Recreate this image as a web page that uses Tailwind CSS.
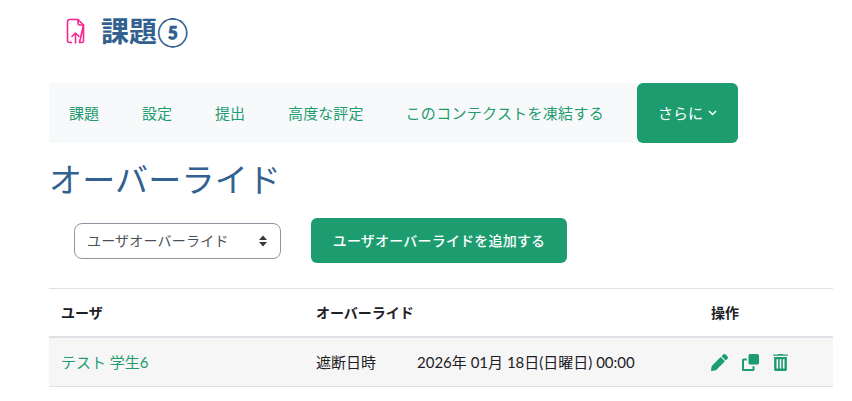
<!DOCTYPE html>
<html lang="ja">
<head>
  <meta charset="UTF-8" />
  <title>オーバーライド</title>
  <script src="https://cdn.jsdelivr.net/npm/@tailwindcss/browser@4"></script>
</head>
<body class="bg-white text-[#1d2125] font-['Lato','Noto_Sans_CJK_JP',sans-serif] text-[15px] overflow-hidden">
  <div class="w-[852px] h-[401px] pl-[49px] pr-[19px] overflow-hidden">
    <!-- Page header -->
    <div class="flex items-center h-[83px] pb-[22px] pl-[17px]">
      <svg class="w-[19px] h-[26px] text-[#f7258f]" viewBox="0 0 19 26" fill="none" stroke="currentColor" stroke-width="1.6" stroke-linecap="round" stroke-linejoin="round">
        <path d="M12 1.5H3.5a2 2 0 0 0-2 2v19a2 2 0 0 0 2 2h2M13.500 24.500h2a2 2 0 0 0 2-2V7z" />
        <path d="M12 1.500v3.500a2 2 0 0 0 2 2h3.500L12 1.500zM9.500 25v-10M6 18.500l3.500-3.500 3.500 3.500" />
      </svg>
      <h1 class="ml-[16px] text-[28px] leading-none font-bold text-[#32608f]">課題⑤</h1>
    </div>

    <!-- Secondary navigation -->
    <nav class="flex items-stretch h-[60px] w-[689px] text-[#1d9d6f]">
      <div class="flex items-center flex-1 bg-[#f8f9fa] pl-[20px] gap-[43px]">
        <a>課題</a>
        <a>設定</a>
        <a>提出</a>
        <a class="whitespace-nowrap -ml-[0px] tracking-[0.1px]">高度な評定</a>
        <a class="whitespace-nowrap -ml-[1px] tracking-[0.3px]">このコンテクストを凍結する</a>
      </div>
      <button class="flex items-center justify-center gap-[5px] w-[101px] rounded-md bg-[#1d9d6f] text-white">
        さらに
        <svg class="w-[9px] h-[6px]" viewBox="0 0 9 6" fill="none" stroke="currentColor" stroke-width="1.500"><path d="M1 1l3.500 3.500L8 1" /></svg>
      </button>
    </nav>

    <h2 class="mt-[14px] text-[33px] leading-[44px] text-[#32608f] tracking-[0.2px]">オーバーライド</h2>

    <!-- Controls -->
    <div class="flex items-center mt-[17px] pl-[25px]">
      <div class="flex items-center justify-between w-[207px] h-[36px] pl-[12px] pr-[13px] border border-[#8f959e] rounded-lg text-[14px] text-[#495057] tracking-[0.2px]">
        ユーザオーバーライド
        <svg class="w-[8px] h-[12px] text-[#343a40]" viewBox="0 0 8 12" fill="currentColor"><path d="M4 0.500L8 5H0zM4 11.500L0 7h8z" /></svg>
      </div>
      <button class="ml-[30px] h-[45px] w-[256px] rounded-md bg-[#1d9d6f] text-white text-[14px] font-medium tracking-[0.2px]">ユーザオーバーライドを追加する</button>
    </div>

    <!-- Overrides table -->
    <div class="mt-[25px] w-[784px]">
      <div class="flex items-center h-[50px] border-t border-[#dee2e6] border-b-2 font-bold text-[14px]">
        <div class="w-[267px] pl-[12px]">ユーザ</div>
        <div class="w-[395px]">オーバーライド</div>
        <div>操作</div>
      </div>
      <div class="flex items-center h-[49px] bg-[#f6f6f6] border-b border-[#dee2e6]">
        <div class="w-[267px] pl-[12px] text-[#1d9d6f]">テスト 学生6</div>
        <div class="flex w-[395px]">
          <span class="w-[101px]">遮断日時</span>
          <span>2026年 01月 18日(日曜日) 00:00</span>
        </div>
        <div class="flex items-center gap-[14px] text-[#1d9d6f]">
          <svg class="w-[17px] h-[17px]" viewBox="0 0 512 512" fill="currentColor"><path d="M497.900 142.100l-46.100 46.100c-4.700 4.700-12.300 4.700-17 0l-111-111c-4.700-4.700-4.700-12.300 0-17l46.100-46.100c18.700-18.700 49.100-18.700 67.900 0l60.100 60.100c18.800 18.700 18.800 49.100 0 67.900zM284.200 99.800L21.600 362.400.4 483.900c-2.900 16.400 11.400 30.600 27.800 27.800l121.500-21.300 262.600-262.600c4.700-4.700 4.700-12.300 0-17l-111-111c-4.800-4.700-12.400-4.700-17.100 0z" /></svg>
          <svg class="w-[17px] h-[17px]" viewBox="0 0 17 17" fill="currentColor"><path d="M6.500 1.500A1.500 1.500 0 0 1 8 0h7.500A1.500 1.500 0 0 1 17 1.500V9a1.500 1.500 0 0 1-1.500 1.500H8A1.500 1.500 0 0 1 6.500 9z" /><path d="M4.800 4.500H1.500A1.500 1.500 0 0 0 0 6v9.500A1.500 1.500 0 0 0 1.500 17H11a1.500 1.500 0 0 0 1.500-1.500v-3.300h-2v2.800H2V6.500h2.800z" /></svg>
          <svg class="w-[15px] h-[17px]" viewBox="0 0 448 512" fill="currentColor"><path d="M432 32H312l-9.400-18.700A24 24 0 0 0 281.100 0H166.800a23.700 23.700 0 0 0-21.400 13.300L136 32H16A16 16 0 0 0 0 48v32a16 16 0 0 0 16 16h416a16 16 0 0 0 16-16V48a16 16 0 0 0-16-16z" transform="translate(0 0) scale(1 .55)" /><path fill-rule="evenodd" d="M32 90h384v374a48 48 0 0 1-48 48H80a48 48 0 0 1-48-48zm72 70v280h48V160zm96 0v280h48V160zm96 0v280h48V160z" /></svg>
        </div>
      </div>
    </div>
  </div>
</body>
</html>
